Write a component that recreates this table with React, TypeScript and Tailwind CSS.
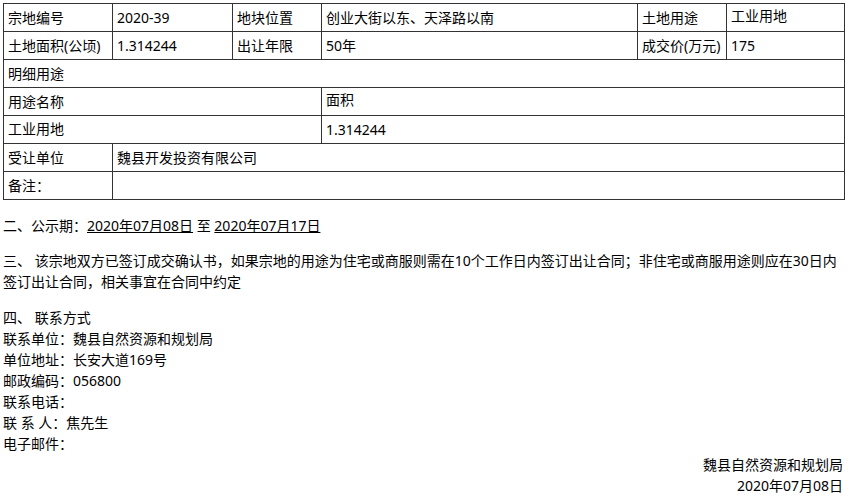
export default function App() {
  const td = 'border border-[#333] h-[28px] px-[4px] py-0 align-middle';

  return (
    <main className="min-h-screen bg-white text-black text-[14px] leading-[21px] font-['Noto_Sans','Noto_Sans_CJK_SC',sans-serif] pl-[3px] pr-[7px] pt-[3px]">
      {/* 宗地信息表 */}
      <table className="w-[841px] table-fixed border-collapse">
        <colgroup>
          <col className="w-[109px]" />
          <col className="w-[120px]" />
          <col className="w-[89px]" />
          <col className="w-[316px]" />
          <col className="w-[89px]" />
          <col className="w-[118px]" />
        </colgroup>
        <tbody>
          <tr>
            <td className={td}>宗地编号</td>
            <td className={td}>2020-39</td>
            <td className={td}>地块位置</td>
            <td className={td}>创业大街以东、天泽路以南</td>
            <td className={td}>土地用途</td>
            <td className={`${td} pb-[5px]`}>工业用地</td>
          </tr>
          <tr>
            <td className={`${td} whitespace-nowrap`}>土地面积(公顷)</td>
            <td className={td}>1.314244</td>
            <td className={td}>出让年限</td>
            <td className={td}>50年</td>
            <td className={`${td} whitespace-nowrap`}>成交价(万元)</td>
            <td className={td}>175</td>
          </tr>
          <tr>
            <td className={td} colSpan={6}>明细用途</td>
          </tr>
          <tr>
            <td className={td} colSpan={3}>用途名称</td>
            <td className={`${td} pb-[4px]`} colSpan={3}>面积</td>
          </tr>
          <tr>
            <td className={`${td} pb-[3px]`} colSpan={3}>工业用地</td>
            <td className={td} colSpan={3}>1.314244</td>
          </tr>
          <tr>
            <td className={td}>受让单位</td>
            <td className={td} colSpan={5}>魏县开发投资有限公司</td>
          </tr>
          <tr>
            <td className={td}>备注：</td>
            <td className={td} colSpan={5}></td>
          </tr>
        </tbody>
      </table>

      <p className="mt-[15px]">
        二、公示期：<span className="underline">2020年07月08日</span> 至 <span className="underline">2020年07月17日</span>
      </p>

      <p className="mt-[14px]">
        三、 该宗地双方已签订成交确认书，如果宗地的用途为住宅或商服则需在10个工作日内签订出让合同；非住宅或商服用途则应在30日内签订出让合同，相关事宜在合同中约定
      </p>

      <div className="mt-[15px]">
        <p>四、 联系方式</p>
        <p>联系单位：魏县自然资源和规划局</p>
        <p>单位地址：长安大道169号</p>
        <p>邮政编码：056800</p>
        <p>联系电话：</p>
        <p>联 系 人：焦先生</p>
        <p>电子邮件：</p>
        <p className="text-right">魏县自然资源和规划局</p>
        <p className="text-right">2020年07月08日</p>
      </div>
    </main>
  );
}
